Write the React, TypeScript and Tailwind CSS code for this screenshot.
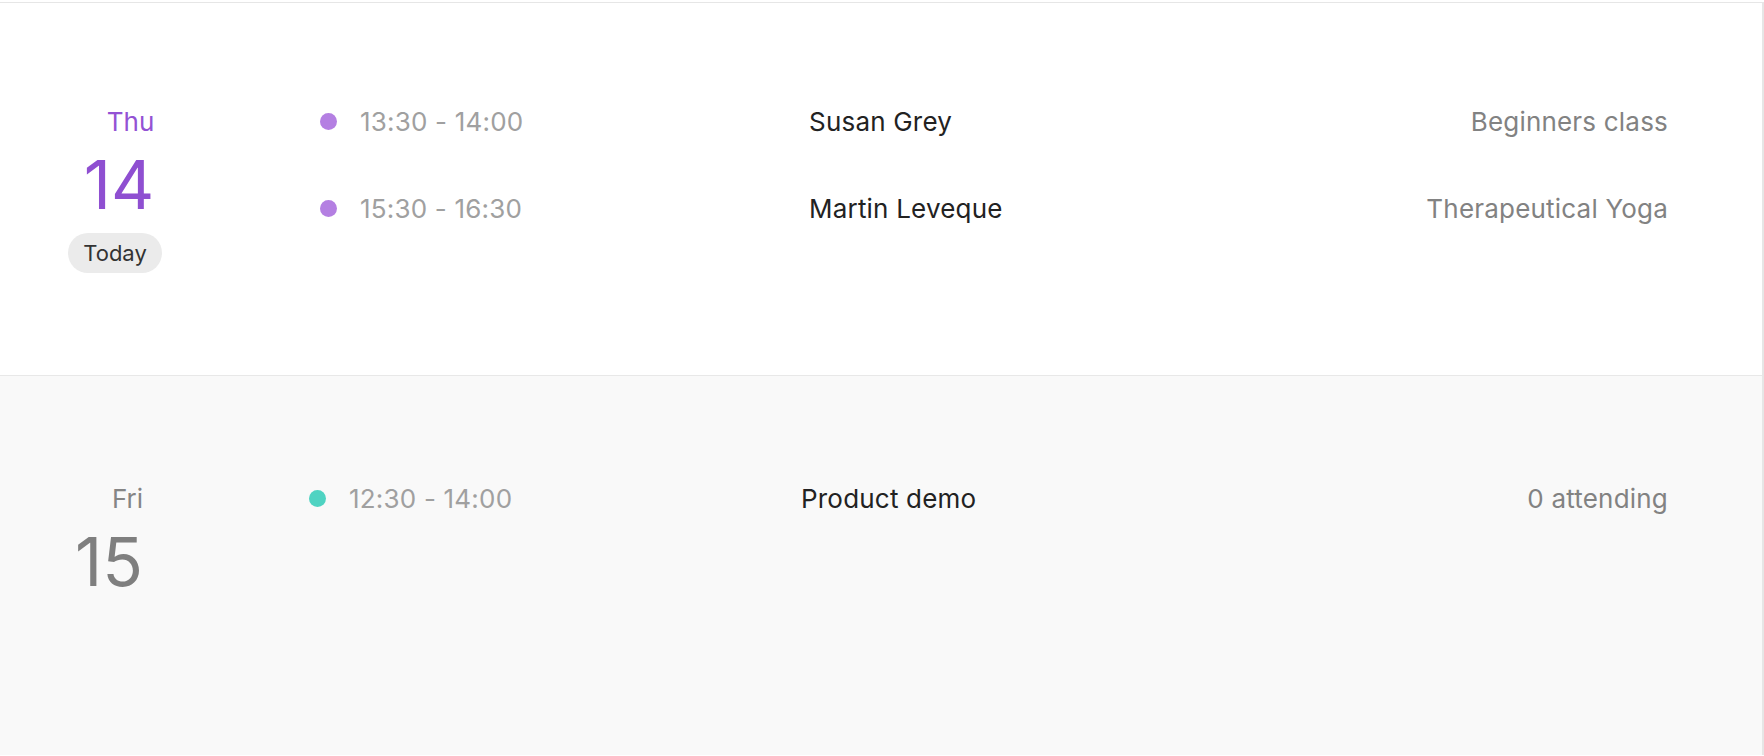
import React from 'react';

type Event = {
  time: string;
  title: string;
  detail: string;
};

const thursday: Event[] = [
  { time: '13:30 - 14:00', title: 'Susan Grey', detail: 'Beginners class' },
  { time: '15:30 - 16:30', title: 'Martin Leveque', detail: 'Therapeutical Yoga' },
];

const friday: Event[] = [{ time: '12:30 - 14:00', title: 'Product demo', detail: '0 attending' }];

const EventRow: React.FC<{ event: Event; dot: string; timeCol: string }> = ({ event, dot, timeCol }) => (
  <div className="flex h-[36px] items-center text-[26px] tracking-[0.2px]">
    <div className={`flex items-center ${timeCol}`}>
      <span className={`h-[17px] w-[17px] rounded-full ${dot}`} />
      <span className="ml-[23px] text-[#a0a0a0]">{event.time}</span>
    </div>
    <div className="flex-1 text-[#222222]">{event.title}</div>
    <div className="text-right text-[#828282]">{event.detail}</div>
  </div>
);

const App: React.FC = () => {
  return (
    <div className="min-h-screen bg-white pt-[2px]" style={{ fontFamily: 'Inter, "Noto Sans", sans-serif' }}>
      <div className="border-t border-r-2 border-[#e6e6e6]">
        {/* Today */}
        <section className="flex h-[373px] pt-[100px] pl-[68px] pr-[94px] border-b border-[#e8e8e8] bg-white">
          <div className="flex w-[94px] flex-col items-center">
            <div className="flex flex-col items-end pl-[8px]">
              <div className="flex h-[36px] items-center text-[26px] text-[#9352d4]">Thu</div>
              <div className="mt-[12px] text-[67px] leading-none text-[#8f4fd1]">14</div>
            </div>
            <div className="mt-[15px] flex h-[40px] w-[94px] items-center justify-center rounded-full bg-[#ebebeb] text-[22px] text-[#333333]">
              Today
            </div>
          </div>
          <div className="ml-[158px] flex flex-1 flex-col gap-[51px]">
            {thursday.map((e) => (
              <EventRow key={e.time} event={e} dot="bg-[#b47fe2]" timeCol="w-[489px]" />
            ))}
          </div>
        </section>

        {/* Tomorrow */}
        <section className="flex min-h-[379px] pt-[104px] pl-[75px] pr-[94px] bg-[#f9f9f9]">
          <div className="flex w-[68px] flex-col items-end">
            <div className="flex h-[36px] items-center text-[26px] text-[#858585]">Fri</div>
            <div className="mt-[12px] text-[67px] leading-none text-[#7f7f7f]">15</div>
          </div>
          <div className="ml-[166px] flex flex-1 flex-col gap-[51px]">
            {friday.map((e) => (
              <EventRow key={e.time} event={e} dot="bg-[#4fd3c2]" timeCol="w-[492px]" />
            ))}
          </div>
        </section>
      </div>
    </div>
  );
};

export default App;
